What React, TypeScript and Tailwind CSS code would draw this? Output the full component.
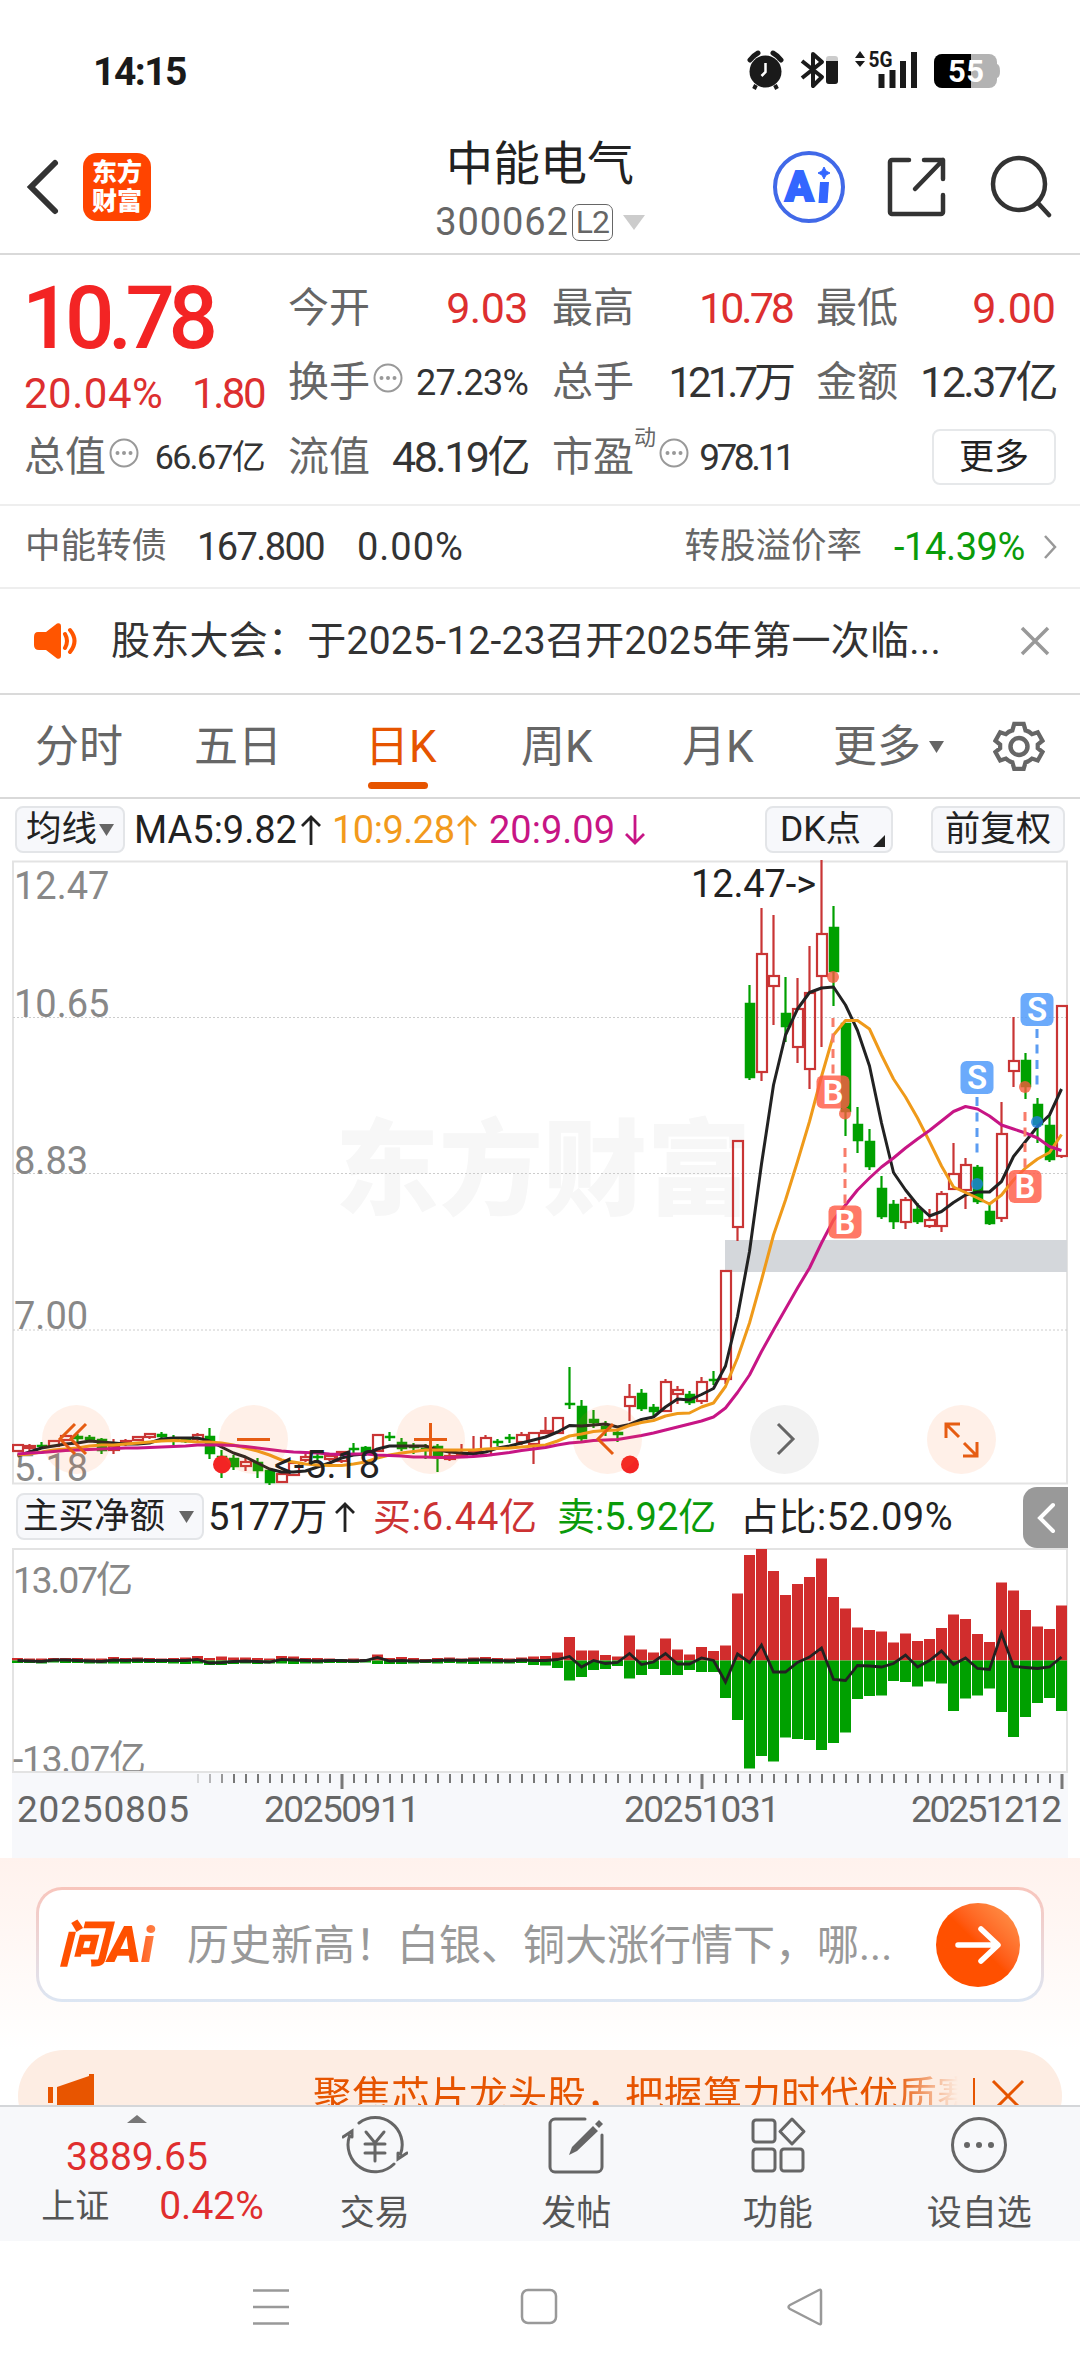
import type { ReactNode } from 'react'

// [up (1) / down (0), high, body top, body bottom, low] in chart pixels
const Candles = [
  [1, 585, 585, 591, 591], [1, 584, 586, 588, 591], [0, 582, 585, 587, 589], [1, 581, 581, 586, 586],
  [1, 576, 576, 580, 580], [0, 574, 576, 579, 584], [0, 575, 577, 580, 582], [0, 578, 579, 591, 594],
  [1, 579, 586, 590, 594], [1, 579, 581, 582, 586], [1, 576, 577, 580, 580], [1, 573, 574, 577, 579],
  [0, 572, 574, 577, 578], [0, 575, 578, 580, 585], [0, 577, 579, 582, 583], [1, 573, 575, 579, 581],
  [0, 568, 576, 594, 599], [0, 590, 596, 602, 618], [0, 595, 598, 607, 610], [1, 598, 602, 606, 611],
  [0, 598, 602, 611, 618], [0, 609, 610, 623, 625], [1, 612, 614, 622, 623], [1, 602, 603, 615, 616],
  [1, 594, 597, 600, 602], [0, 591, 596, 598, 602], [1, 593, 596, 599, 601], [1, 591, 592, 601, 603],
  [0, 583, 588, 590, 593], [0, 586, 587, 593, 596], [1, 575, 575, 591, 591], [0, 572, 576, 578, 581],
  [0, 578, 582, 589, 591], [0, 583, 586, 588, 594], [0, 584, 588, 591, 599], [0, 584, 586, 596, 612],
  [1, 592, 596, 599, 601], [1, 584, 595, 597, 598], [1, 576, 591, 593, 596], [1, 575, 578, 595, 597],
  [0, 579, 581, 583, 586], [0, 574, 577, 579, 583], [1, 572, 575, 582, 585], [1, 572, 573, 584, 604],
  [1, 557, 571, 573, 574], [1, 557, 558, 573, 574], [0, 507, 543, 545, 549], [0, 540, 546, 579, 581],
  [0, 550, 559, 563, 568], [0, 561, 566, 570, 576], [0, 569, 572, 575, 582], [1, 524, 537, 546, 561],
  [0, 529, 533, 549, 551], [0, 544, 547, 552, 557], [1, 519, 522, 551, 552], [1, 526, 530, 534, 544],
  [0, 531, 534, 543, 545], [1, 517, 522, 541, 544], [0, 511, 519, 521, 525], [1, 411, 411, 519, 524],
  [1, 280, 281, 367, 381], [0, 125, 143, 218, 220], [1, 48, 94, 212, 221], [1, 55, 116, 126, 165],
  [0, 117, 153, 167, 182], [1, 118, 149, 187, 203], [1, 86, 133, 209, 229], [1, 0, 74, 116, 187],
  [0, 46, 67, 112, 146], [0, 163, 163, 252, 276], [0, 247, 264, 281, 293], [0, 269, 281, 307, 310],
  [0, 316, 328, 357, 359], [0, 340, 344, 362, 369], [1, 337, 340, 362, 369], [0, 343, 349, 362, 364],
  [1, 349, 360, 366, 368], [1, 331, 334, 366, 372], [1, 283, 314, 329, 329], [1, 298, 305, 330, 349],
  [0, 305, 307, 342, 344], [0, 342, 351, 364, 365], [1, 242, 274, 358, 362], [1, 157, 201, 211, 227],
  [0, 193, 200, 227, 239], [0, 238, 244, 265, 283], [0, 255, 265, 300, 302], [1, 146, 146, 296, 298],
]

const Ma5 = [
  596, 592, 588, 586, 584, 583, 581, 582, 583, 584, 584, 583, 579, 578, 578, 578, 581, 587, 593, 597, 603, 609,
  612, 612, 611, 607, 603, 598, 595, 594, 589, 586, 586, 586, 586, 590, 592, 593, 594, 592, 588, 586, 583, 580,
  577, 572, 565.5, 566, 565, 564, 567, 564.5, 559.5, 557, 547, 539, 540, 534.5, 528.5, 506, 456.5, 391.5, 304, 225,
  175, 149, 132.5, 128, 127, 145, 170.5, 206, 263, 312.5, 330, 345, 356, 351.5, 342.5, 335, 332, 332, 321.5, 296.5,
  281.5, 266.5, 255, 229,
]

const Ma10 = [
  595, 594, 592, 590, 589, 588, 586, 585, 585, 584, 583, 582, 581, 580.5, 581, 582, 582, 583, 585, 588, 591, 595,
  600, 602, 604, 605, 605.5, 605.5, 604, 602, 598, 595, 593, 591.5, 590, 590, 590, 590, 590, 589, 588.5, 588, 587, 586,
  585, 581, 576, 574, 571.5, 570.5, 570, 565.5, 562.5, 560.5, 556, 553.5, 553, 547, 543, 526.5, 498, 463, 420, 375,
  340, 301.5, 261.5, 216.5, 175, 160.5, 160.5, 169, 195, 219, 237, 258, 281.5, 306, 327, 332.5, 338, 344, 335, 320,
  308, 299, 292.5, 274.5,
]

const Ma20 = [
  594, 593, 592.5, 591.5, 590.5, 590, 589.5, 589, 588.5, 588, 588, 587.5, 587, 586.5, 586, 585, 585, 585, 585.5, 586.5,
  588, 589.5, 591, 592, 592.5, 593, 594, 594.5, 594, 594, 595, 595.5, 596, 597, 597, 597.5, 597.5, 597, 596.5, 595.5,
  594, 592.5, 590.5, 589, 587.5, 585, 583, 582, 580.5, 580, 579.5, 577.5, 575.5, 573, 570, 567, 564, 561, 557, 548,
  532.5, 515, 491.5, 470, 449, 428, 408, 383, 360, 345, 330, 318, 307, 298, 288, 279, 270.5, 261, 251.5, 246.5, 249,
  256, 265, 269, 273, 278, 286.5, 290.5,
]

const Buys = [
  2.5, 2, 2, 2.5, 2.5, 2.5, 2, 2, 3.5, 2.5, 3, 2.5, 2, 2.5, 3, 4.5, 2.5, 4, 3, 3, 2.5, 2, 4.5, 4, 2.5, 2.5, 2, 1.5,
  2, 1.5, 6, 2.5, 3.5, 2.5, 1.5, 2.5, 3, 2, 3, 3.5, 2.5, 2, 3, 4, 4.5, 8, 23.5, 10, 10, 5.5, 4, 25, 11, 8, 22, 11, 6,
  13.5, 9.5, 15, 67, 105.5, 111.5, 89.5, 65.5, 76.5, 83.5, 102, 63.5, 52, 33, 30.5, 29, 18, 27, 19.5, 21.5, 32.5, 46,
  41.5, 26.5, 18.5, 78, 70, 50.5, 34, 31.5, 55,
]

const Sells = [
  2.5, 2.5, 3, 2, 2.5, 2.5, 3, 3, 3, 3, 2.5, 2.5, 2.5, 3, 3.5, 3, 4.5, 4.5, 3.5, 3, 3.5, 3, 3, 3.5, 3, 3, 2.5, 2.5,
  2.5, 2, 3.5, 3.5, 3.5, 3, 2.5, 3, 2.5, 3, 3.5, 3, 3, 3, 2.5, 4.5, 5, 7.5, 20, 16.5, 9.5, 8.5, 5.5, 18, 14.5, 8.5,
  14.5, 14.5, 9.5, 11.5, 11.5, 37.5, 59.5, 108, 95.5, 101, 77, 78.5, 79.5, 89.5, 82.5, 72, 38.5, 35.5, 35, 20.5, 21.5,
  26, 21, 23, 50.5, 38, 35, 28, 51.5, 76.5, 56.5, 42.5, 37.5, 50.5,
]

const NetLine = [
  0, 0.5, 1, -0.5, -0.5, 0, 0.5, 1, -0.5, 0, -0.5, 0, 0, 0, 0, -1, 2.5, 2, 1, 0.5, 1, 1.5, -1, -0.5, 0, 0.5, 0, 0, 0.5,
  0, -3, 0.5, 0, 0.5, 0.5, 0, -0.5, 0, -0.5, -0.5, 0, 0.5, -0.5, 0, 0, -1, -4, 6.5, 0, 3, 2, -7, 4, 1.5, -7, 3.5, 3.5,
  -2.5, 0, 21.5, -6.5, 2, -15.5, 11.5, 11.5, 2, -3.5, -12.5, 19, 20, 5, 5.5, 6.5, 3, -5.5, 6.5, 0, -9.5, 4, -2.5, 8, 9,
  -27, 6, 7, 8, 6.5, -3.5,
]

const Signals = [
  { kind: 'B', x: 821, y: 232, from: 158, to: 214, dot: 117 },
  { kind: 'B', x: 833, y: 362, from: 288, to: 345, dot: 253.5 },
  { kind: 'B', x: 1013, y: 326.5, from: 252, to: 308, dot: 227 },
  { kind: 'S', x: 965, y: 217.5, from: 237, to: 293, dot: 324 },
  { kind: 'S', x: 1025, y: 149.5, from: 169, to: 225, dot: 262 },
]

const PriceLabels = [
  { text: '12.47', y: 38.5 },
  { text: '10.65', y: 157 },
  { text: '8.83', y: 314 },
  { text: '7.00', y: 469 },
  { text: '5.18', y: 621 },
]

const barX = (i: number) => 5.5 + 12 * i
const toLine = (values: number[], base = 0) => values.map((v, i) => `${barX(i)},${v + base}`).join(' ')

const svgText = "font-['Roboto','Noto_Sans_CJK_SC',sans-serif]"

const StatusBar = () => {
  return (
    <div className="flex h-[110px] items-center justify-between pt-[34px] pr-[80px] pl-[93px] text-[#1a1a1a]">
      <span className="text-[39px] leading-none font-bold tracking-[-1.500px]">14:15</span>
      <svg className="-mt-1 h-[44px] w-[256px]" viewBox="744 50 256 44">
        {/* alarm */}
        <circle cx="765.500" cy="73.500" r="16" fill="#1a1a1a" />
        <path d="M750 62a26 26 0 0 1 8-7M781 62a26 26 0 0 0-8-7" stroke="#1a1a1a" strokeWidth="5" strokeLinecap="round" fill="none" />
        <path d="M756 87l-2 4M775 87l2 4" stroke="#1a1a1a" strokeWidth="4" />
        <path d="M765.500 65v9l-4 4" stroke="#fff" strokeWidth="2.500" fill="none" />
        {/* bluetooth */}
        <path d="M802 63l20 16-9 9V56l9 8-20 16" stroke="#1a1a1a" strokeWidth="4" fill="none" strokeLinejoin="round" />
        <rect x="826" y="58" width="12" height="28" rx="3" fill="#ccc" />
        <path d="M826 63h12v20a3 3 0 0 1-3 3h-6a3 3 0 0 1-3-3z" fill="#1a1a1a" />
        {/* signal */}
        <path d="M855 60l5-7 5 7zM855 63l5 6 5-6z" fill="#1a1a1a" />
        <text x="868.500" y="69" fontSize="22" fontWeight="700" fill="#1a1a1a" textLength="24" lengthAdjust="spacingAndGlyphs" className={svgText}>5G</text>
        <path d="M881.500 76v14M892.500 72v18M903 63v27M914 54v36" stroke="#1a1a1a" strokeWidth="6" />
        {/* battery */}
        <rect x="934" y="56" width="63" height="34" rx="8" fill="#b3b3b3" />
        <path d="M942 56h29v34h-29a8 8 0 0 1-8-8V64a8 8 0 0 1 8-8z" fill="#000" />
        <path d="M997 66q3 1 3 7t-3 7z" fill="#b3b3b3" />
        <text x="948" y="84" fontSize="31" fontWeight="700" fill="#fff" textLength="36" className={svgText}>55</text>
      </svg>
    </div>
  )
}

const Header = () => {
  return (
    <header className="relative flex h-[145px] items-center justify-between border-b-2 border-[#d9d9d9] pt-[11px] pr-[28px] pl-[26px]">
      <div className="flex items-center">
        <svg className="h-[58px] w-[34px]" viewBox="0 0 34 58">
          <path d="M29 5L5 29l24 24" fill="none" stroke="#333" strokeWidth="6" strokeLinecap="round" />
        </svg>
        <div className="ml-[23px] flex h-[68px] w-[68px] flex-col items-center justify-center rounded-[14px] bg-[#ff4400] text-[25px] leading-[29px] font-black text-white">
          <span>东方</span>
          <span>财富</span>
        </div>
      </div>
      <div className="absolute inset-x-0 top-[26px] flex flex-col items-center text-[#222]">
        <h1 className="text-[47px] leading-[56px]">中能电气</h1>
        <div className="mt-[8px] flex items-center text-[38px] leading-[44px] text-[#666]">
          <span className="tracking-[0.900px]">300062</span>
          <span className="ml-[3px] flex h-[37px] w-[41px] items-center justify-center rounded-[7px] border border-[#666] text-[32px] tracking-[-1px]">L2</span>
          <svg className="ml-[10px] h-[15px] w-[22px]" viewBox="0 0 22 15"><path d="M0 0h22L11 15z" fill="#ccc" /></svg>
        </div>
      </div>
      <div className="flex items-center">
        <svg className="h-[74px] w-[74px]" viewBox="0 0 74 74">
          <circle cx="37" cy="37" r="34" fill="none" stroke="#4169e8" strokeWidth="4" />
          <text x="13" y="51" fontSize="42" fontWeight="900" fill="#3366ff" stroke="#3366ff" strokeWidth="2" className={svgText}>A</text>
          <path d="M48 32h9l-1.500 21h-9z" fill="#3366ff" />
          <path d="M52 17l2 4 4 2-4 2-2 4-2-4-4-2 4-2z" fill="#3366ff" stroke="#3366ff" strokeLinejoin="round" />
        </svg>
        <svg className="ml-[40px] h-[62px] w-[62px]" viewBox="0 0 62 62" fill="none" stroke="#333" strokeWidth="4.500" strokeLinecap="round" strokeLinejoin="round">
          <path d="M23 4H6a2 2 0 0 0-2 2v50a2 2 0 0 0 2 2h49a2 2 0 0 0 2-2V39M38 4h19v19M57 4L29 33" />
        </svg>
        <svg className="ml-[42px] h-[64px] w-[62px]" viewBox="0 0 62 64" fill="none" stroke="#333" strokeWidth="4.500" strokeLinecap="round">
          <circle cx="29" cy="29" r="26" />
          <path d="M48 48l11 12" />
        </svg>
      </div>
    </header>
  )
}

const Hint = () => {
  return (
    <svg className="-mt-[9px] ml-[3px] h-[30px] w-[30px]" viewBox="0 0 30 30">
      <circle cx="15" cy="15" r="13.500" fill="none" stroke="#999" strokeWidth="2" />
      <path d="M8.500 15h.01M15 15h.01M21.500 15h.01" stroke="#999" strokeWidth="4" strokeLinecap="round" />
    </svg>
  )
}

type CellProps = { label: string; value: string; tone?: string; hint?: ReactNode }

const Cell = ({ label, value, tone = 'text-[43px] tracking-[-2.500px] text-[#333]', hint }: CellProps) => {
  return (
    <div className="flex items-center justify-between whitespace-nowrap">
      <span className="flex items-center text-[41px] leading-none text-[#666]">{label}{hint}</span>
      <span className={`leading-none ${tone}`}>{value}</span>
    </div>
  )
}

const Quote = () => {
  return (
    <section className="grid h-[251px] auto-rows-[74.5px] grid-cols-4 gap-x-6 border-b-2 border-[#eee] px-6 pt-[16px]">
      <div className="row-span-2 flex flex-col">
        <span className="mt-[7px] -ml-[2px] text-[87px] leading-[80px] font-medium tracking-[-6.500px] text-[#f32424]">10.78</span>
        <div className="mt-[11px] flex justify-between text-[42px] leading-[50px] text-[#dd2f2f]">
          <span className="tracking-[0.500px]">20.04%</span>
          <span className="tracking-[-2.500px]">1.80</span>
        </div>
      </div>
      <Cell label="今开" value="9.03" tone="text-[43px] tracking-[-0.500px] text-[#dd2f2f]" />
      <Cell label="最高" value="10.78" tone="text-[43px] tracking-[-3px] text-[#dd2f2f]" />
      <Cell label="最低" value="9.00" tone="text-[43px] text-[#dd2f2f]" />
      <Cell label="换手" value="27.23%" tone="text-[36px] tracking-[-0.800px] text-[#333]" hint={<Hint />} />
      <Cell label="总手" value="121.7万" tone="text-[42px] tracking-[-4px] text-[#333]" />
      <Cell label="金额" value="12.37亿" />
      <Cell label="总值" value="66.67亿" tone="text-[34px] tracking-[-1.700px] text-[#333]" hint={<Hint />} />
      <Cell label="流值" value="48.19亿" />
      <Cell
        label="市盈"
        value="978.11"
        tone="text-[37px] tracking-[-3.500px] text-[#333]"
        hint={<><span className="-mt-[38px] text-[22px]">动</span><Hint /></>}
      />
      <div className="flex items-center justify-end">
        <button className="h-[56px] w-[124px] rounded-lg border-2 border-[#e6e8ea] text-[35px] leading-none text-[#222]">更多</button>
      </div>
    </section>
  )
}

const Bond = () => {
  return (
    <section className="flex h-[83px] items-center border-b-2 border-[#eee] pr-[23px] pl-[25px] text-[38px] leading-none text-[#333]">
      <span className="text-[35.500px] text-[#666]">中能转债</span>
      <span className="ml-[30px] tracking-[-1.600px]">167.800</span>
      <span className="ml-[33px] tracking-[1px]">0.00%</span>
      <span className="ml-auto text-[35.500px] text-[#666]">转股溢价率</span>
      <span className="ml-[32px] tracking-[-0.400px] text-[#0a9b0a]">-14.39%</span>
      <svg className="ml-[18px] h-[26px] w-[14px]" viewBox="0 0 14 26"><path d="M2 2l10 11L2 24" fill="none" stroke="#999" strokeWidth="2.500" /></svg>
    </section>
  )
}

const Notice = () => {
  return (
    <section className="flex h-[106px] items-center border-b-2 border-[#dadada] pr-[30px] pl-[34px]">
      <svg className="h-[38px] w-[46px]" viewBox="0 0 46 38">
        <path d="M4 10h8L23 1.500q4-1 4 3v29q0 4-4 3L12 28H5q-5 0-5-5v-8q0-5 4-5z" fill="#ff5500" />
        <path d="M31 12q4 7 0 14M36 8q9 11 0 22" fill="none" stroke="#ff5500" strokeWidth="4" strokeLinecap="round" />
      </svg>
      <p className="ml-[31px] text-[39px] leading-none tracking-[0.250px] whitespace-nowrap text-[#333]">股东大会：于2025-12-23召开2025年第一次临...</p>
      <svg className="ml-auto h-[30px] w-[30px]" viewBox="0 0 30 30"><path d="M2 2l26 26M28 2L2 28" stroke="#999" strokeWidth="3.500" /></svg>
    </section>
  )
}

const Tabs = () => {
  return (
    <nav className="flex h-[104px] items-center border-b-2 border-[#d9d9d9] pt-[2px] pl-[35px] text-[44px] leading-none text-[#666]">
      <span className="w-[159px]">分时</span>
      <span className="w-[171px]">五日</span>
      <span className="relative w-[156px] text-[#e65400]">
        日K
        <i className="absolute top-[57px] left-[3px] h-[7px] w-[60px] rounded bg-[#e65400]" />
      </span>
      <span className="w-[161px]">周K</span>
      <span className="w-[151px]">月K</span>
      <span>更多</span>
      <svg className="ml-[8px] h-[12px] w-[15px]" viewBox="0 0 15 12"><path d="M0 0h15L7.500 12z" fill="#666" /></svg>
      <svg className="ml-[49px] h-[54px] w-[52px]" viewBox="0 0 52 54" fill="none" stroke="#666" strokeWidth="4.500">
        <path d="M21 3h10l2 7q4 1 7 4l6-2 5 9-5 4v4l5 4-5 9-6-2q-3 3-7 4l-2 7H21l-2-7q-4-1-7-4l-6 2-5-9 5-4v-4l-5-4 5-9 6 2q3-3 7-4z" transform="translate(1.500 1) scale(.94)" />
        <circle cx="26" cy="26.500" r="8.500" />
      </svg>
    </nav>
  )
}

const Arrow = ({ down = false }: { down?: boolean }) => {
  return (
    <svg className={down ? 'h-[30px] w-[20px] rotate-180' : 'h-[30px] w-[20px]'} viewBox="0 0 20 30">
      <path d="M10 30V2M1 11l9-9 9 9" fill="none" stroke="currentColor" strokeWidth="2.800" />
    </svg>
  )
}

const MaBar = () => {
  const chip = 'flex h-[47px] items-center rounded-lg border-2 border-[#e3e5e8] bg-[#f7f8fb] text-[35.500px] leading-none'
  return (
    <div className="flex h-[61px] items-start pt-[7px] pr-[15px] pl-[15px] text-[38px] leading-[48px] text-[#222]">
      <span className={`${chip} w-[110px] pl-[9px]`}>
        均线
        <svg className="ml-[2px] h-[12px] w-[15px]" viewBox="0 0 15 12"><path d="M0 0h15L7.500 12z" fill="#666" /></svg>
      </span>
      <span className="ml-[9px] flex w-[198px] items-center justify-between pr-[11px]">MA5:9.82<Arrow /></span>
      <span className="flex w-[157px] items-center justify-between pr-[12px] tracking-[-0.500px] text-[#f29a1c]">10:9.28<Arrow /></span>
      <span className="flex w-[156px] items-center justify-between text-[#c71585]">20:9.09<Arrow down /></span>
      <span className={`${chip} ml-auto w-[128px] pl-[13px]`}>
        DK点
        <svg className="mt-[22px] ml-[12px] h-[12px] w-[12px]" viewBox="0 0 12 12"><path d="M12 0v12H0z" fill="#222" /></svg>
      </span>
      <span className={`${chip} ml-[38px] w-[134px] justify-center`}>前复权</span>
    </div>
  )
}

const circleColors = { orange: 'bg-[#ff6a1f]/10 text-[#e65c12]', gray: 'bg-[#f2f2f2] text-[#666]' }

const controls = [
  { d: 'M33 19L18 34l15 15M44 19L29 34l15 15', color: circleColors.orange },
  { d: 'M18 34.500h33', color: circleColors.orange },
  { d: 'M18 34.500h33M34.500 18v33', color: circleColors.orange },
  { d: 'M40 19L25 34l15 15', color: circleColors.orange },
  { d: 'M28 19l15 15-15 15', color: circleColors.gray },
  { d: 'M19 33V19h14M19 19l13 13M50 37v14H36M50 51L37 38', color: circleColors.orange },
]

const KChart = () => {
  return (
    <div className="relative mx-[12px] h-[625px]">
      <svg className="h-[625px] w-[1056px]" viewBox="0 0 1056 625">
        <text x="323" y="347" fontSize="104" fontWeight="900" fill="#f7f7f7" className={svgText}>东方财富</text>
        <rect x="1" y="1.500" width="1054" height="622" fill="none" stroke="#e3e3e3" strokeWidth="2" />
        <path d="M1 157.500h1054M1 313.500h1054M1 470h1054" stroke="#ccc" strokeDasharray="2 2" />
        <rect x="713" y="380" width="342" height="32" fill="#d4d7db" />
        {PriceLabels.map((label) => (
          <text key={label.text} x="2" y={label.y} fontSize="38" fill="#888" className={svgText}>{label.text}</text>
        ))}
        {Candles.map(([up, high, top, bottom, low], i) => (
          <g key={i} stroke={up ? '#c93535' : '#00a000'} strokeWidth="2.200">
            <path d={`M${barX(i)} ${high}V${top}M${barX(i)} ${bottom}V${low}`} />
            <rect x={barX(i) - 4.5} y={top} width="10" height={Math.max(bottom - top, 1)} fill={up ? 'none' : '#00a000'} strokeWidth={up ? 2.2 : 0.5} />
          </g>
        ))}
        <g fill="none" strokeWidth="3" strokeLinejoin="round">
          <polyline points={toLine(Ma5)} stroke="#222" />
          <polyline points={toLine(Ma10)} stroke="#ef9a1a" />
          <polyline points={toLine(Ma20)} stroke="#c71585" />
        </g>
        {Signals.map(({ kind, x, y, from, to, dot }) => (
          <g key={`${kind}${x}`}>
            <path d={`M${x} ${from}V${to}`} stroke={kind === 'B' ? '#f87c6a' : '#5b9cf2'} strokeWidth="3" strokeDasharray="9 6.500" />
            <circle cx={x} cy={dot} r="6" fill={kind === 'B' ? '#f85a3c' : '#1f7fe0'} opacity=".8" />
            <rect x={x - 16.5} y={y - 16.5} width="33" height="33" rx="6" fill={kind === 'B' ? '#ff5c45' : '#4a97fa'} opacity=".82" />
            <text x={x} y={y + 11.5} textAnchor="middle" fontSize="33" fontWeight="600" fill="#fff" className={svgText}>{kind}</text>
          </g>
        ))}
        <text x="679" y="37" fontSize="38" fill="#222" textLength="125" className={svgText}>12.47-&gt;</text>
        <text x="262" y="618" fontSize="38" fill="#222" textLength="106" className={svgText}>&lt;-5.18</text>
        <circle cx="210" cy="604.500" r="9" fill="#f32424" />
        <circle cx="618" cy="604.500" r="9" fill="#f32424" />
      </svg>
      <div className="absolute top-[545px] left-[30px] flex w-[954px] justify-between">
        {controls.map(({ d, color }) => (
          <svg key={d} className={`h-[69px] w-[69px] rounded-full ${color}`} viewBox="0 0 69 69">
            <path d={d} fill="none" stroke="currentColor" strokeWidth="3" />
          </svg>
        ))}
      </div>
    </div>
  )
}

const FlowBar = () => {
  return (
    <div className="relative flex h-[63px] items-center pl-[16px] text-[38px] leading-none whitespace-nowrap text-[#222]">
      <span className="flex h-[47px] w-[188px] items-center justify-between rounded-lg border-2 border-[#e3e5e8] bg-[#f7f8fb] pr-[8px] pl-[5px] text-[35.500px]">
        主买净额
        <svg className="h-[12px] w-[15px]" viewBox="0 0 15 12"><path d="M0 0h15L7.500 12z" fill="#666" /></svg>
      </span>
      <span className="ml-[4px] flex w-[165px] items-center tracking-[-1px]">5177万<span className="ml-[9px]"><Arrow /></span></span>
      <span className="w-[184px] tracking-[0.800px] text-[#cc3333]">买:6.44亿</span>
      <span className="w-[183px] text-[#0a9b0a]">卖:5.92亿</span>
      <span className="tracking-[0.500px]">占比:52.09%</span>
      <button className="absolute top-[2px] right-[12px] flex h-[61px] w-[45px] items-center justify-center rounded-l-[14px] bg-[#999]">
        <svg className="h-[32px] w-[20px]" viewBox="0 0 20 32"><path d="M17 3L4 16l13 13" fill="none" stroke="#fff" strokeWidth="4" strokeLinecap="round" /></svg>
      </button>
    </div>
  )
}

const FlowChart = () => {
  const ticks = Buys.map((_, i) => i).filter((i) => i >= 15)
  return (
    <div className="mx-[12px] h-[310px] bg-[#f7f8fb]">
      <svg className="h-[310px] w-[1056px]" viewBox="0 0 1056 310">
        <rect x="1" y="1" width="1054" height="223" fill="#fff" stroke="#e3e3e3" strokeWidth="2" />
        <text x="1" y="45" fontSize="37" fill="#888" textLength="120" className={svgText}>13.07亿</text>
        <svg width="1056" height="223"><text x="1" y="224" fontSize="37" fill="#888" textLength="133" className={svgText}>-13.07亿</text></svg>
        {Buys.map((v, i) => (
          <rect key={i} x={barX(i) - 5.5} y={112.5 - v} width="11" height={v} fill="#d12d2d" />
        ))}
        {Sells.map((v, i) => (
          <rect key={i} x={barX(i) - 5.5} y={112.5} width="11" height={v} fill="#00a000" />
        ))}
        <polyline points={toLine(NetLine, 112.5)} fill="none" stroke="#222" strokeWidth="2.800" />
        {ticks.map((i) => {
          const major = i === 27 || i === 57 || i === 87
          return (
            <path key={i} d={`M${barX(i) + 0.5} 226v${major ? 15 : 9}`} stroke="#777" strokeWidth={major ? 3 : 2} opacity={i < 18 ? (i - 14) / 4 : 1} />
          )
        })}
        <g fontSize="37" fill="#666" className={svgText}>
          <text x="5" y="274" textLength="172">20250805</text>
          <text x="252" y="274" textLength="156">20250911</text>
          <text x="612" y="274" textLength="156">20251031</text>
          <text x="899" y="274" textLength="151">20251212</text>
        </g>
      </svg>
    </div>
  )
}

const AskAi = () => {
  return (
    <section className="h-[192px] bg-linear-to-b from-[#fff2ed] to-white px-[36px] pt-[29px]">
      <div className="rounded-[26px] bg-linear-to-b from-[#f8c5bc] to-[#dce6f3] p-[3px]">
        <div className="flex h-[109px] items-center rounded-[23px] bg-white pr-[21px] pl-[19px]">
          <span className="w-[129px] bg-linear-to-r from-[#ff5000] from-60% to-[#ff9a60] to-85% bg-clip-text text-[50px] leading-[60px] font-black text-transparent italic">问Ai</span>
          <p className="mt-[3px] text-[42px] leading-none whitespace-nowrap text-[#999]">历史新高！白银、铜大涨行情下，哪...</p>
          <svg className="ml-auto h-[84px] w-[84px] shrink-0 rounded-full bg-linear-to-tr from-[#ff5000] from-50% to-[#ff9a50]" viewBox="0 0 84 84">
            <path d="M22 42h38M45 26l17 16-17 16" fill="none" stroke="#fff" strokeWidth="5.500" strokeLinecap="round" strokeLinejoin="round" />
          </svg>
        </div>
      </div>
    </section>
  )
}

const Promo = () => {
  return (
    <section className="h-[55px] overflow-hidden px-[18px]">
      <div className="flex h-[92px] items-center rounded-full bg-[#fdede3] pl-[30px] text-[#e65400]">
        <svg className="h-[44px] w-[46px]" viewBox="0 0 46 44">
          <path d="M0 13h5v16H0zM9 13L41 2V0h5v44h-5v-4L9 31z" fill="#e85500" />
        </svg>
        <p className="ml-[219px] w-[645px] overflow-hidden mask-r-from-90% text-[39px] leading-[48px] whitespace-nowrap">聚焦芯片龙头股，把握算力时代优质赛道</p>
        <i className="ml-[15px] h-[36px] w-[2px] bg-[#e65400]" />
        <svg className="ml-[16px] h-[34px] w-[34px]" viewBox="0 0 34 34"><path d="M2 2l30 30M32 2L2 32" stroke="#e65400" strokeWidth="3" /></svg>
      </div>
    </section>
  )
}

const navItems = [
  {
    name: '交易',
    icon: (
      <>
        <path d="M17 8A27 27 0 0 1 58.500 39M52 49A27 27 0 0 1 7.500 21M1 22l9-6v6M65 38l-9 6v-6" />
        <path d="M24 17l9 11 9-11M33 28v18M23 29h20M23 38h20" />
      </>
    ),
  },
  {
    name: '发帖',
    icon: (
      <>
        <path d="M42 4H12a5 5 0 0 0-5 5v43a5 5 0 0 0 5 5h42a5 5 0 0 0 5-5V20" />
        <path d="M26 40l3-8L50 11l5 5-21 20zM52 9l4-4 4 4-4 4z" fill="#666" stroke="none" />
      </>
    ),
  },
  {
    name: '功能',
    icon: (
      <>
        <rect x="8" y="5" width="22" height="22" rx="3" />
        <rect x="8" y="34" width="22" height="22" rx="3" />
        <rect x="36" y="34" width="22" height="22" rx="3" />
        <path d="M47 4l12 12.500L47 29 35 16.500z" strokeLinejoin="round" />
      </>
    ),
  },
  {
    name: '设自选',
    icon: (
      <>
        <circle cx="33" cy="30" r="26.500" />
        <path d="M21 30h.01M33 30h.01M45 30h.01" strokeWidth="6" />
      </>
    ),
  },
]

const BottomNav = () => {
  return (
    <footer className="flex h-[136px] border-t-2 border-[#d4d6d9] bg-[#f7f8fa] text-[34px] text-[#555]">
      <div className="flex w-[274px] flex-col items-center pt-[8px]">
        <svg className="h-[8px] w-[20px]" viewBox="0 0 20 8"><path d="M10 0l10 8H0z" fill="#777" /></svg>
        <span className="mt-[10px] text-[39px] leading-[48px] text-[#e02e2e]">3889.65</span>
        <span className="mt-[3px] flex gap-[50px] pl-[31px] leading-[44px]">上证<span className="text-[39px]/[44px] text-[#e02e2e]">0.42%</span></span>
      </div>
      {navItems.map(({ name, icon }) => (
        <div key={name} className="flex w-[201.500px] flex-col items-center pt-[8px]">
          <svg className="h-[60px] w-[66px]" viewBox="0 0 66 60" fill="none" stroke="#666" strokeWidth="3" strokeLinecap="round">{icon}</svg>
          <span className="mt-[15px] text-[35px] leading-[48px]">{name}</span>
        </div>
      ))}
    </footer>
  )
}

const SystemNav = () => {
  return (
    <div className="h-[132px] bg-white pt-[46px]">
      <svg className="ml-[250px] h-[40px] w-[576px]" viewBox="250 2287 576 40" fill="none" stroke="#999" strokeWidth="2.500" strokeLinejoin="round">
        <path d="M253 2290.500h36M253 2307h36M253 2323.500h36" />
        <rect x="522" y="2290" width="34" height="33" rx="6" />
        <path d="M819 2290q2-1 2 1v32q0 2-2 1l-29-15q-3-2 0-4z" />
      </svg>
    </div>
  )
}

const App = () => {
  return (
    <main className="w-[1080px] overflow-hidden bg-white font-['Roboto','Noto_Sans_CJK_SC',sans-serif]">
      <StatusBar />
      <Header />
      <Quote />
      <Bond />
      <Notice />
      <Tabs />
      <MaBar />
      <KChart />
      <FlowBar />
      <FlowChart />
      <AskAi />
      <Promo />
      <BottomNav />
      <SystemNav />
    </main>
  )
}

export default App
